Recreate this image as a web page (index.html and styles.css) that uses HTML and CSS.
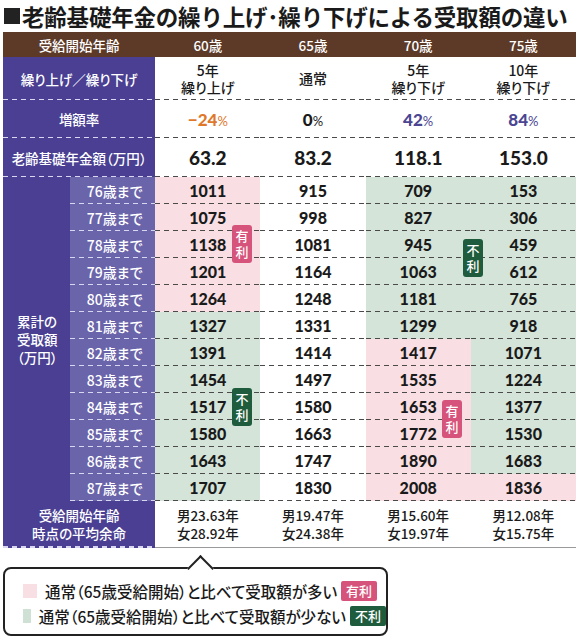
FILE: index.html
```html
<!DOCTYPE html>
<html lang="ja">
<head>
    <meta charset="UTF-8">
    <title>老齢基礎年金の繰り上げ･繰り下げによる受取額の違い</title>
    <link rel="stylesheet" href="styles.css">
</head>
<body>
    <div class="page">
        <h1 class="title"><span class="title-mark"></span>老齢基礎年金の繰り上げ･繰り下げによる受取額の違い</h1>

        <div class="chart-wrap">
            <table class="chart">
                <colgroup>
                    <col class="c-outer">
                    <col class="c-sub">
                    <col class="c-val">
                    <col class="c-val">
                    <col class="c-val">
                    <col class="c-val">
                </colgroup>
                <tr class="row-head">
                    <th colspan="2">受給開始年齢</th>
                    <th>60歳</th>
                    <th>65歳</th>
                    <th>70歳</th>
                    <th>75歳</th>
                </tr>
                <tr class="row-type">
                    <th colspan="2" class="side">繰り上げ／繰り下げ</th>
                    <td>5年<br>繰り上げ</td>
                    <td>通常</td>
                    <td>5年<br>繰り下げ</td>
                    <td>10年<br>繰り下げ</td>
                </tr>
                <tr class="row-rate">
                    <th colspan="2" class="side">増額率</th>
                    <td><span class="rate minus">−24<small>%</small></span></td>
                    <td><span class="rate">0<small>%</small></span></td>
                    <td><span class="rate plus">42<small>%</small></span></td>
                    <td><span class="rate plus">84<small>%</small></span></td>
                </tr>
                <tr class="row-amount">
                    <th colspan="2" class="side">老齢基礎年金額（万円）</th>
                    <td>63.2</td>
                    <td>83.2</td>
                    <td>118.1</td>
                    <td>153.0</td>
                </tr>
                <!-- 累計の受取額 -->
                <tr class="row-sum">
                    <th rowspan="12" class="outer">累計の<br>受取額<br>（万円）</th>
                    <th class="age">76歳まで</th>
                    <td class="pink">1011</td><td>915</td><td class="green">709</td><td class="green">153</td>
                </tr>
                <tr class="row-sum">
                    <th class="age">77歳まで</th>
                    <td class="pink">1075</td><td>998</td><td class="green">827</td><td class="green">306</td>
                </tr>
                <tr class="row-sum">
                    <th class="age">78歳まで</th>
                    <td class="pink">1138</td><td>1081</td><td class="green">945</td><td class="green">459</td>
                </tr>
                <tr class="row-sum">
                    <th class="age">79歳まで</th>
                    <td class="pink">1201</td><td>1164</td><td class="green">1063</td><td class="green">612</td>
                </tr>
                <tr class="row-sum">
                    <th class="age">80歳まで</th>
                    <td class="pink">1264</td><td>1248</td><td class="green">1181</td><td class="green">765</td>
                </tr>
                <tr class="row-sum">
                    <th class="age">81歳まで</th>
                    <td class="green">1327</td><td>1331</td><td class="green">1299</td><td class="green">918</td>
                </tr>
                <tr class="row-sum">
                    <th class="age">82歳まで</th>
                    <td class="green">1391</td><td>1414</td><td class="pink">1417</td><td class="green">1071</td>
                </tr>
                <tr class="row-sum">
                    <th class="age">83歳まで</th>
                    <td class="green">1454</td><td>1497</td><td class="pink">1535</td><td class="green">1224</td>
                </tr>
                <tr class="row-sum">
                    <th class="age">84歳まで</th>
                    <td class="green">1517</td><td>1580</td><td class="pink">1653</td><td class="green">1377</td>
                </tr>
                <tr class="row-sum">
                    <th class="age">85歳まで</th>
                    <td class="green">1580</td><td>1663</td><td class="pink">1772</td><td class="green">1530</td>
                </tr>
                <tr class="row-sum">
                    <th class="age">86歳まで</th>
                    <td class="green">1643</td><td>1747</td><td class="pink">1890</td><td class="green">1683</td>
                </tr>
                <tr class="row-sum">
                    <th class="age">87歳まで</th>
                    <td class="green">1707</td><td>1830</td><td class="pink">2008</td><td class="pink">1836</td>
                </tr>
                <tr class="row-life">
                    <th colspan="2" class="side">受給開始年齢<br>時点の平均余命</th>
                    <td>男23.63年<br>女28.92年</td>
                    <td>男19.47年<br>女24.38年</td>
                    <td>男15.60年<br>女19.97年</td>
                    <td>男12.08年<br>女15.75年</td>
                </tr>
            </table>

            <!-- 有利・不利のバッジ -->
            <span class="badge good" style="left: 229px; top: 193px;">有<br>利</span>
            <span class="badge bad" style="left: 460px; top: 207px;">不<br>利</span>
            <span class="badge bad" style="left: 229px; top: 356px;">不<br>利</span>
            <span class="badge good" style="left: 439px; top: 368px;">有<br>利</span>
        </div>

        <div class="legend">
            <span class="legend-tip"></span>
            <div class="legend-item">
                <span class="swatch pink"></span>
                通常（65歳受給開始）と比べて受取額が多い
                <span class="tag good">有利</span>
            </div>
            <div class="legend-item">
                <span class="swatch green"></span>
                通常（65歳受給開始）と比べて受取額が少ない
                <span class="tag bad">不利</span>
            </div>
        </div>
    </div>
</body>
</html>
```

FILE: styles.css
```css
body {
    margin: 0;
    background-color: #fff;
    font-family: 'Noto Sans CJK JP', 'Noto Sans', sans-serif;
    color: #1a1a1a;
}

.page {
    width: 573px;
    padding: 0 4px 0 3px;
}

.title {
    display: flex;
    align-items: center;
    height: 32px;
    margin: 0;
    font-size: 22.5px;
    font-weight: 700;
    letter-spacing: -0.2px;
    white-space: nowrap;
}

.title-mark {
    width: 16px;
    height: 16px;
    margin: 0 2px 0 1px;
    background-color: #222;
}

.chart-wrap {
    position: relative;
}

.chart {
    width: 573px;
    table-layout: fixed;
    border-collapse: collapse;
    border-spacing: 0;
    text-align: center;
}

.c-outer { width: 67px; }
.c-sub { width: 85px; }
.c-val { width: 105px; }

.chart th,
.chart td {
    padding: 0;
    background-repeat: repeat-x;
    background-position: left bottom;
    background-size: 9px 1.5px;
    font-feature-settings: "palt";
}

.chart td {
    background-image: linear-gradient(to right, #4a4a4a 60%, transparent 0);
}

.chart th.side,
.chart th.age {
    background-color: #4a3f92;
    background-image: linear-gradient(to right, #d9d6f0 60%, transparent 0);
    color: #fff;
    font-size: 13.5px;
    font-weight: 500;
}

/* 見出し行 */
.row-head th {
    height: 25px;
    background-color: #5d3a28;
    color: #fff;
    font-size: 13.5px;
    font-weight: 500;
}

.row-type td,
.row-type th {
    height: 43px;
}

.row-type td {
    font-size: 14px;
    font-weight: 500;
    line-height: 17px;
}

.row-rate td,
.row-rate th {
    height: 38px;
}

.rate {
    font-family: 'Lato', sans-serif;
    font-weight: 900;
    font-size: 17px;
}

.rate small {
    font-weight: 400;
    font-size: 13px;
}

.rate.minus { color: #e0782c; }
.rate.plus { color: #4b4592; }

.row-amount td,
.row-amount th {
    height: 39px;
}

.row-amount td {
    font-family: 'Lato', sans-serif;
    font-weight: 900;
    font-size: 19px;
}

/* 累計の受取額 */
.row-sum td,
.row-sum th {
    height: 27px;
}

.row-sum td {
    font-family: 'Lato', sans-serif;
    font-weight: 900;
    font-size: 16px;
}

.chart th.outer {
    background-color: #4a3f92;
    background-image: none;
    color: #fff;
    font-size: 13.5px;
    font-weight: 500;
    line-height: 18px;
    text-align: left;
    padding-left: 14px;
}

.chart th.age {
    background-color: #6a64aa;
    font-size: 14px;
    padding-left: 4px;
}

.chart td.pink { background-color: #f9dfe4; }
.chart td.green { background-color: #d4e4d9; }

.row-life td,
.row-life th {
    height: 46px;
    font-size: 13.5px;
    font-weight: 500;
    line-height: 18px;
    background-image: none;
}

.row-life td {
    border-bottom: 1.5px solid #9a9a9a;
}

.badge {
    position: absolute;
    width: 20px;
    height: 38px;
    border-radius: 3px;
    color: #fff;
    font-size: 13px;
    font-weight: 500;
    line-height: 16px;
    text-align: center;
    padding-top: 3px;
    box-sizing: border-box;
}

.badge.good { background-color: #d6537b; }
.badge.bad { background-color: #1e5c3d; }

/* 凡例 */
.legend {
    position: relative;
    width: 385px;
    margin-top: 19px;
    padding: 9px 0 6px 18px;
    border: 2px solid #222;
    border-radius: 8px;
    box-sizing: border-box;
}

.legend-tip {
    position: absolute;
    top: -10px;
    left: 186px;
    width: 17px;
    height: 17px;
    background-color: #fff;
    border-top: 2px solid #222;
    border-left: 2px solid #222;
    transform: rotate(45deg);
}

.legend-item {
    display: flex;
    align-items: center;
    height: 25px;
    font-size: 15.5px;
    font-weight: 500;
    font-feature-settings: "palt";
    white-space: nowrap;
}

.swatch {
    width: 14px;
    height: 14px;
    margin-right: 8px;
}

.swatch.pink { background-color: #f7dfe4; }
.swatch.green { background-color: #cfe0d4; }

.tag {
    margin-left: 4px;
    padding: 0 5px;
    border-radius: 2px;
    color: #fff;
    font-size: 13px;
    line-height: 20px;
}

.tag.good { background-color: #d6537b; }
.tag.bad { background-color: #1e5c3d; }
```
